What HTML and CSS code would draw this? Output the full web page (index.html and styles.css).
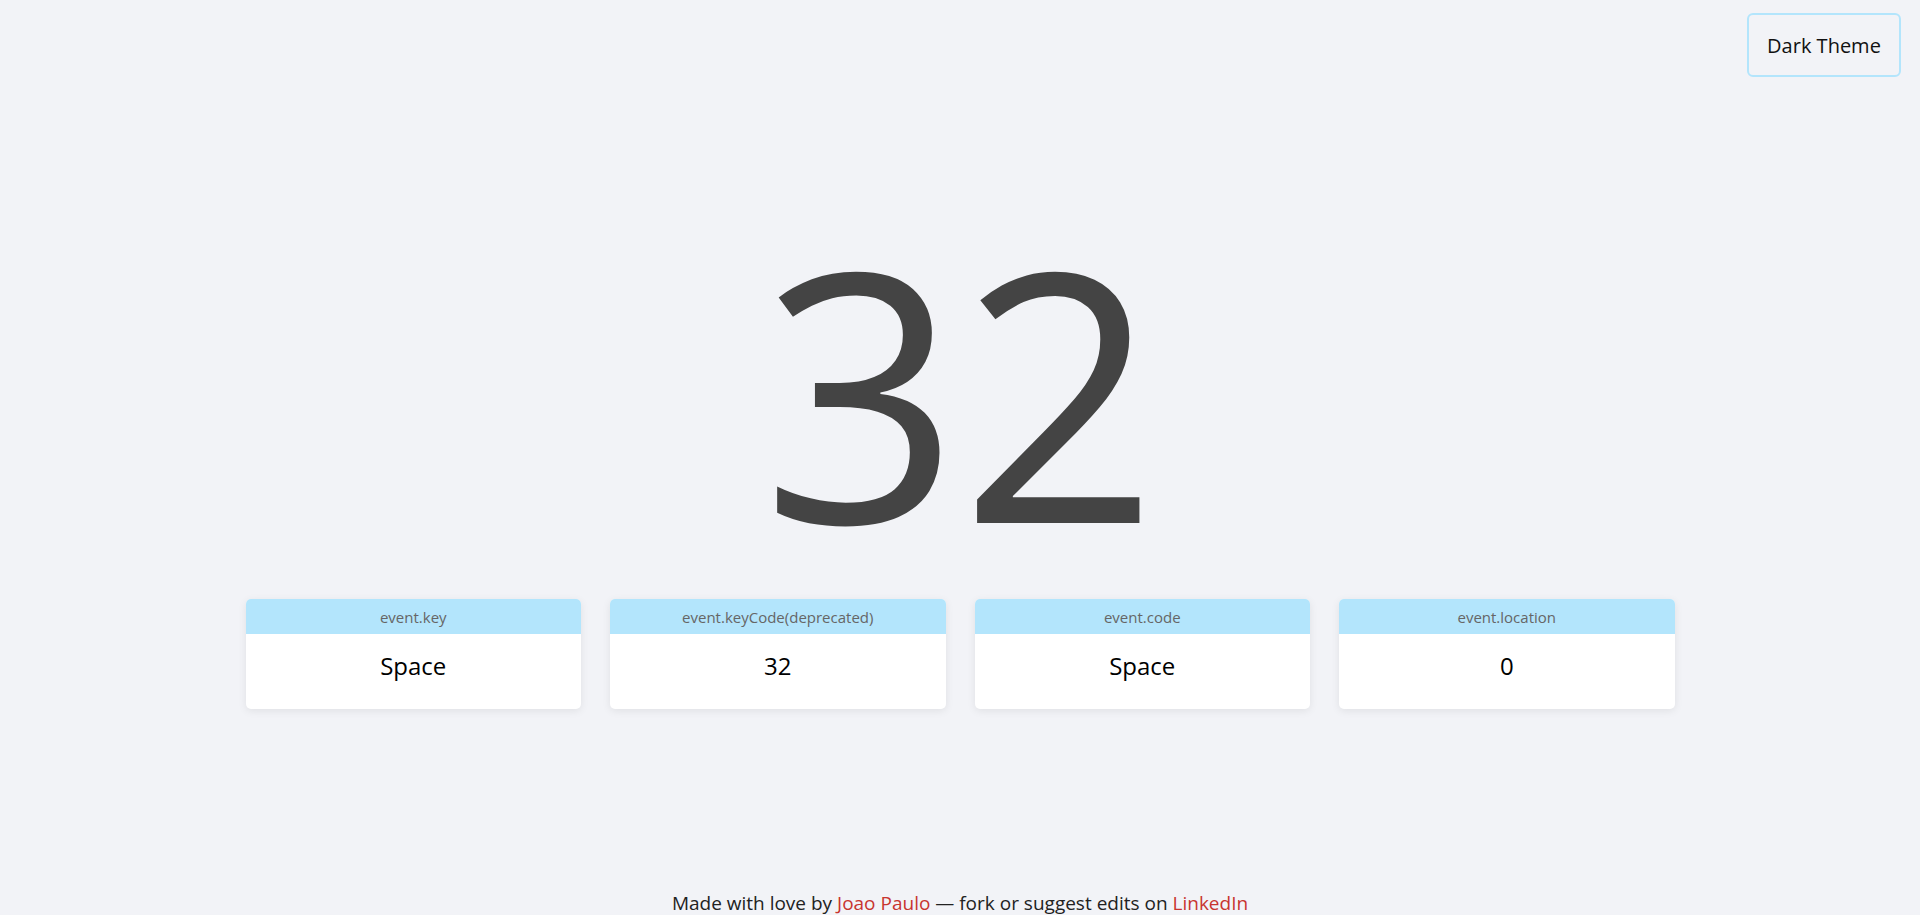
FILE: index.html
```html
<!DOCTYPE html>
<html lang="en">
<head>
<meta charset="utf-8">
<title>Key Codes</title>
<link rel="stylesheet" href="styles.css">
</head>
<body>
<button class="theme-toggle" type="button">Dark Theme</button>
<main class="main">
  <div class="keycode">32</div>
  <section class="cards">
    <div class="card">
      <div class="card-head">event.key</div>
      <div class="card-body">Space</div>
    </div>
    <div class="card">
      <div class="card-head">event.keyCode(deprecated)</div>
      <div class="card-body">32</div>
    </div>
    <div class="card">
      <div class="card-head">event.code</div>
      <div class="card-body">Space</div>
    </div>
    <div class="card">
      <div class="card-head">event.location</div>
      <div class="card-body">0</div>
    </div>
  </section>
</main>
<footer class="footer">
  Made with love by <a class="link" href="#">Joao Paulo</a> — fork or suggest edits on <a class="link" href="#">LinkedIn</a>
</footer>
</body>
</html>
```
FILE: styles.css
```css
* { box-sizing: border-box; }
html, body { height: 100%; }
body {
  margin: 0;
  background: #f2f3f7;
  font-family: "Open Sans", "Noto Sans", sans-serif;
  color: #111;
  display: flex;
  flex-direction: column;
  min-height: 915px;
  overflow: hidden;
}
.theme-toggle {
  position: absolute;
  top: 13px;
  right: 19px;
  width: 154px;
  height: 64px;
  background: transparent;
  border: 2px solid #b3e5fc;
  border-radius: 6px;
  font-family: inherit;
  font-size: 20px;
  color: #111;
  padding: 0;
}
.main {
  display: flex;
  flex-direction: column;
  align-items: center;
  padding-top: 250px;
}
.keycode {
  font-size: 347px;
  line-height: 0.8;
  color: #444;
  height: 278px;
}
.cards {
  margin-top: 71px;
  display: grid;
  grid-template-columns: repeat(4, 335.5px);
  gap: 29px;
}
.card {
  background: #fff;
  border-radius: 5px;
  overflow: hidden;
  box-shadow: 0 2px 8px rgba(0, 0, 0, 0.08);
}
.card-head {
  background: #b3e5fc;
  height: 35px;
  display: flex;
  align-items: center;
  justify-content: center;
  font-size: 15px;
  color: #666;
}
.card-body {
  height: 75px;
  padding-bottom: 12px;
  display: flex;
  align-items: center;
  justify-content: center;
  font-size: 24px;
  color: #000;
}
.footer {
  margin-top: auto;
  text-align: center;
  font-size: 19px;
  line-height: 24px;
  color: #222;
}
.link {
  color: #c8352f;
  text-decoration: none;
}
```
